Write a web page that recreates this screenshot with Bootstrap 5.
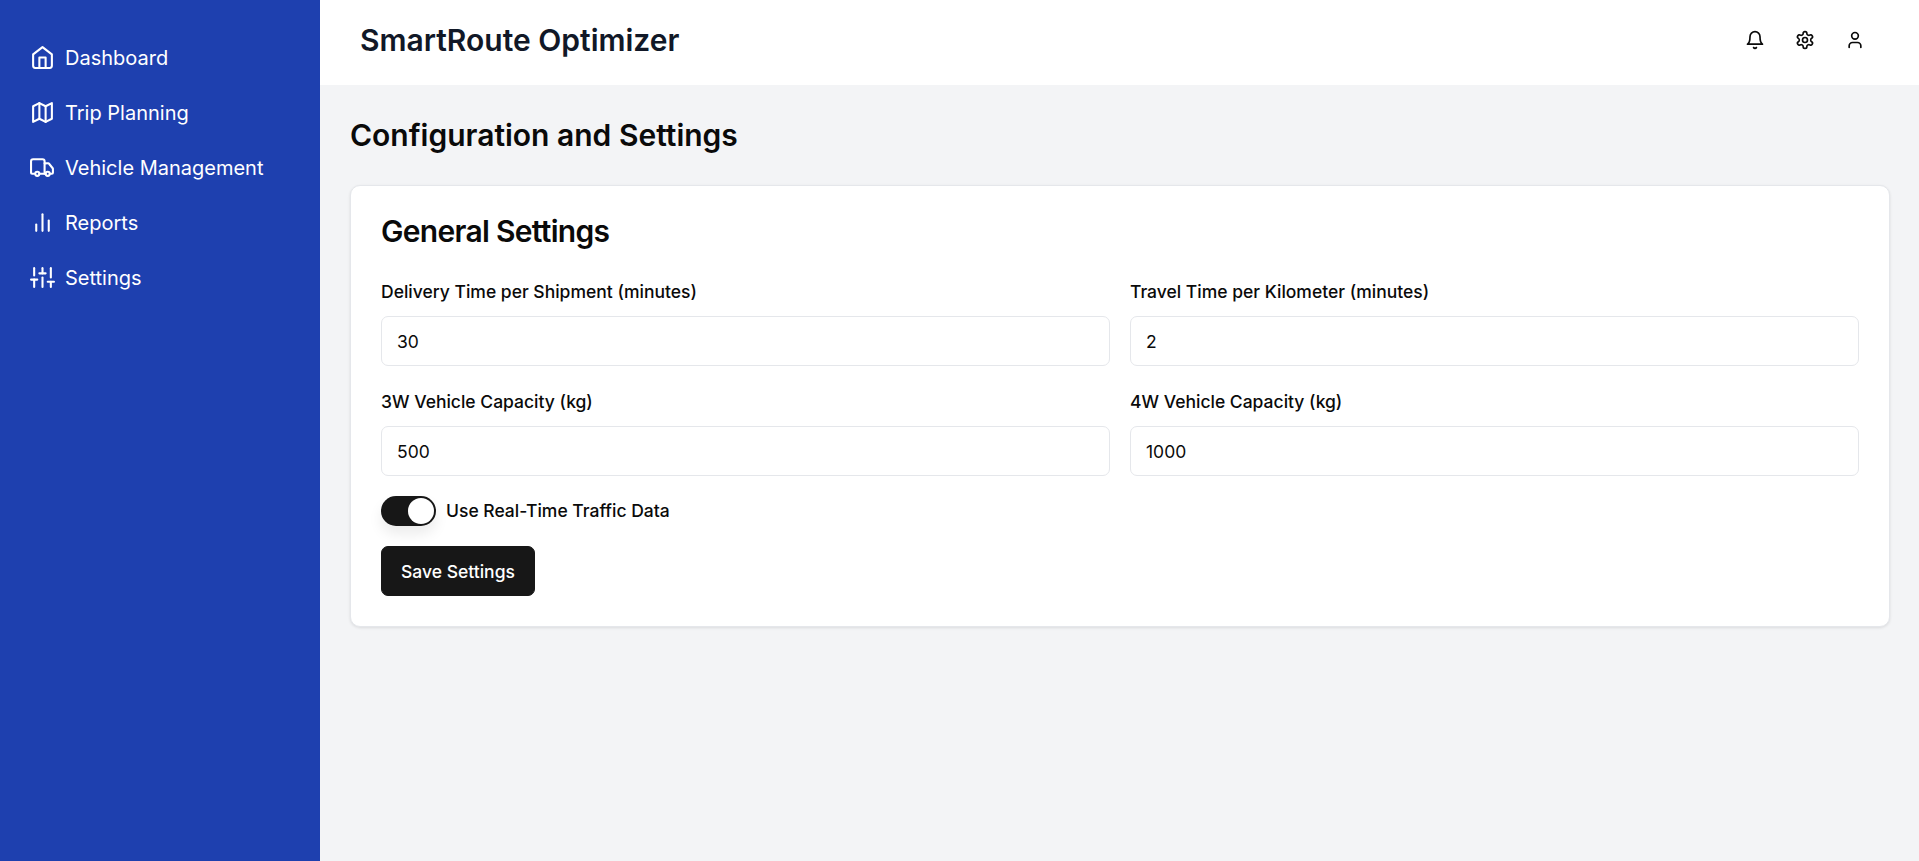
<!DOCTYPE html>
<html lang="en">
<head>
  <meta charset="UTF-8">
  <meta name="viewport" content="width=device-width, initial-scale=1.0">
  <title>SmartRoute Optimizer</title>
  <link href="https://cdn.jsdelivr.net/npm/bootstrap@5.3.3/dist/css/bootstrap.min.css" rel="stylesheet">
  <style>
    body {
      font-family: Inter, "Liberation Sans", sans-serif;
      background: #f3f4f6;
      color: #0a0a0a;
      min-height: 100vh;
    }
    .side-panel {
      width: 320px;
      min-height: 100vh;
      background: #1e40af;
      padding: 30px 30px 0 30px;
    }
    .side-link {
      height: 55px;
      color: #fff;
      font-size: 20px;
      text-decoration: none;
    }
    .side-link svg { width: 25px; height: 25px; margin-right: 10px; }
    .ico {
      fill: none;
      stroke: currentColor;
      stroke-width: 2;
      stroke-linecap: round;
      stroke-linejoin: round;
    }
    .top-bar {
      height: 85px;
      padding: 0 54px 5px 40px;
    }
    .brand-title {
      font-size: 30px;
      font-weight: 600;
      color: #111827;
      margin: 0;
    }
    .top-btn {
      width: 20px;
      height: 20px;
      color: #0a0a0a;
      margin-left: 30px;
    }
    .page-body { padding: 30px 29px 30px 30px; }
    .page-title {
      font-size: 30px;
      font-weight: 600;
      line-height: 36px;
      margin: 2px 0 32px;
    }
    .settings-panel {
      border: 1px solid #e5e7eb;
      border-radius: 10px;
      box-shadow: 0 1px 3px rgba(0,0,0,.1);
      padding: 30px;
    }
    .panel-title {
      font-size: 30px;
      font-weight: 600;
      line-height: 31px;
      letter-spacing: -.7px;
      margin-bottom: 30px;
    }
    .field-row { --bs-gutter-x: 20px; }
    .field-cell { margin-bottom: 21px; }
    .field-label {
      font-size: 17.5px;
      font-weight: 500;
      line-height: 30px;
      margin-bottom: 9px;
    }
    .field-input {
      height: 50px;
      border: 1px solid #e5e7eb;
      border-radius: 7px;
      font-size: 17.5px;
      padding: 0 15px;
      color: #0a0a0a;
      font-family: inherit;
    }
    .switch-row { margin-top: -1px; margin-bottom: 20px; }
    .switch-track {
      width: 55px;
      height: 30px;
      border-radius: 15px;
      background: #171717;
      box-shadow: 0 8px 14px rgba(0,0,0,.08);
      padding: 2px;
    }
    .switch-knob {
      width: 26px;
      height: 26px;
      border-radius: 50%;
      background: #fff;
    }
    .switch-text {
      font-size: 17.5px;
      font-weight: 500;
      margin-left: 10px;
    }
    .save-btn {
      width: 154px;
      height: 50px;
      background: #171717;
      border-color: #171717;
      color: #fff;
      font-size: 17.5px;
      font-weight: 500;
      border-radius: 7px;
      padding: 2px 0 0;
    }
  </style>
</head>
<body>
  <div class="d-flex">
    <nav class="side-panel flex-shrink-0">
      <a href="#" class="side-link d-flex align-items-center">
        <svg class="ico" viewBox="0 0 24 24"><path d="m3 9 9-7 9 7v11a2 2 0 0 1-2 2H5a2 2 0 0 1-2-2z"/><path d="M9 22V12h6v10"/></svg>
        Dashboard
      </a>
      <a href="#" class="side-link d-flex align-items-center">
        <svg class="ico" viewBox="0 0 24 24"><path d="M3 6v15l6-3 6 3 6-3V3l-6 3-6-3-6 3z"/><path d="M9 3v15"/><path d="M15 6v15"/></svg>
        Trip Planning
      </a>
      <a href="#" class="side-link d-flex align-items-center">
        <svg class="ico" viewBox="0 0 24 24"><path d="M14 18V6a2 2 0 0 0-2-2H3a2 2 0 0 0-2 2v11a1 1 0 0 0 1 1h2"/><path d="M15 18H9"/><path d="M19 18h2a1 1 0 0 0 1-1v-3.65a1 1 0 0 0-.22-.62l-3.48-4.35A1 1 0 0 0 17.52 8H14"/><circle cx="17" cy="18" r="2"/><circle cx="7" cy="18" r="2"/></svg>
        Vehicle Management
      </a>
      <a href="#" class="side-link d-flex align-items-center">
        <svg class="ico" viewBox="0 0 24 24"><path d="M18 20V10"/><path d="M12 20V4"/><path d="M6 20v-6"/></svg>
        Reports
      </a>
      <a href="#" class="side-link d-flex align-items-center">
        <svg class="ico" viewBox="0 0 24 24"><path d="M4 21v-7"/><path d="M4 10V3"/><path d="M12 21v-9"/><path d="M12 8V3"/><path d="M20 21v-5"/><path d="M20 12V3"/><path d="M1 14h6"/><path d="M9 8h6"/><path d="M17 16h6"/></svg>
        Settings
      </a>
    </nav>

    <div class="flex-grow-1">
      <header class="top-bar bg-white d-flex align-items-center justify-content-between">
        <h1 class="brand-title">SmartRoute Optimizer</h1>
        <div class="d-flex">
          <svg class="ico top-btn" viewBox="0 0 24 24"><path d="M6 8a6 6 0 0 1 12 0c0 7 3 9 3 9H3s3-2 3-9"/><path d="M10.3 21a1.94 1.94 0 0 0 3.4 0"/></svg>
          <svg class="ico top-btn" viewBox="0 0 24 24"><path d="M12.22 2h-.44a2 2 0 0 0-2 2v.18a2 2 0 0 1-1 1.73l-.43.25a2 2 0 0 1-2 0l-.15-.08a2 2 0 0 0-2.73.73l-.22.38a2 2 0 0 0 .73 2.73l.15.1a2 2 0 0 1 1 1.72v.51a2 2 0 0 1-1 1.74l-.15.09a2 2 0 0 0-.73 2.73l.22.38a2 2 0 0 0 2.73.73l.15-.08a2 2 0 0 1 2 0l.43.25a2 2 0 0 1 1 1.73V20a2 2 0 0 0 2 2h.44a2 2 0 0 0 2-2v-.18a2 2 0 0 1 1-1.73l.43-.25a2 2 0 0 1 2 0l.15.08a2 2 0 0 0 2.73-.73l.22-.39a2 2 0 0 0-.73-2.73l-.15-.08a2 2 0 0 1-1-1.74v-.5a2 2 0 0 1 1-1.74l.15-.09a2 2 0 0 0 .73-2.73l-.22-.38a2 2 0 0 0-2.73-.73l-.15.08a2 2 0 0 1-2 0l-.43-.25a2 2 0 0 1-1-1.73V4a2 2 0 0 0-2-2z"/><circle cx="12" cy="12" r="3"/></svg>
          <svg class="ico top-btn" viewBox="0 0 24 24"><path d="M19 21v-2a4 4 0 0 0-4-4H9a4 4 0 0 0-4 4v2"/><circle cx="12" cy="7" r="4"/></svg>
        </div>
      </header>

      <main class="page-body">
        <h2 class="page-title">Configuration and Settings</h2>
        <div class="settings-panel bg-white">
          <h3 class="panel-title">General Settings</h3>
          <form>
            <div class="row field-row">
              <div class="col-6 field-cell">
                <label class="field-label d-block" for="deliveryTime">Delivery Time per Shipment (minutes)</label>
                <input id="deliveryTime" class="form-control field-input" type="text" value="30">
              </div>
              <div class="col-6 field-cell">
                <label class="field-label d-block" for="travelTime">Travel Time per Kilometer (minutes)</label>
                <input id="travelTime" class="form-control field-input" type="text" value="2">
              </div>
              <div class="col-6 field-cell">
                <label class="field-label d-block" for="cap3w">3W Vehicle Capacity (kg)</label>
                <input id="cap3w" class="form-control field-input" type="text" value="500">
              </div>
              <div class="col-6 field-cell">
                <label class="field-label d-block" for="cap4w">4W Vehicle Capacity (kg)</label>
                <input id="cap4w" class="form-control field-input" type="text" value="1000">
              </div>
            </div>
            <div class="d-flex align-items-center switch-row">
              <div class="switch-track d-flex justify-content-end">
                <div class="switch-knob"></div>
              </div>
              <span class="switch-text">Use Real-Time Traffic Data</span>
            </div>
            <button type="button" class="btn save-btn">Save Settings</button>
          </form>
        </div>
      </main>
    </div>
  </div>
</body>
</html>
